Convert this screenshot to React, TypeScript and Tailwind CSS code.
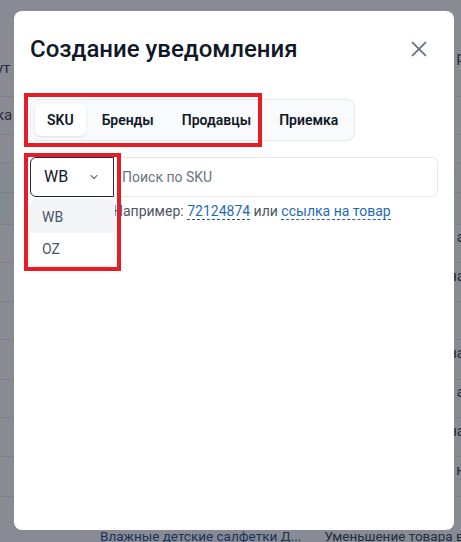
import React from "react";

const ROWS = [
  { h: 97, left: "ут", right: "р", header: true },
  { h: 38, left: "ка", right: "" },
  { h: 28, left: "", right: "" },
  { h: 30, left: "", right: "", dark: true },
  { h: 32, left: "", right: "", dark: true },
  { h: 38, left: "", right: "а" },
  { h: 39, left: "", right: "на" },
  { h: 38, left: "", right: "|", accent: true },
  { h: 40, left: "", right: "на" },
  { h: 38, left: "", right: "а" },
  { h: 39, left: "", right: "на" },
  { h: 40, left: "", right: "н" },
];

const TABS = ["SKU", "Бренды", "Продавцы", "Приемка"];

const Background: React.FC = () => (
  <div className="flex flex-col text-[15px] text-gray-700">
    {ROWS.map((r, i) => (
      <div
        key={i}
        className={`flex items-center justify-between border-b border-gray-200 ${
          r.dark ? "bg-gray-50" : "bg-white"
        }`}
        style={{ height: r.h }}
      >
        <span className={`-ml-[4px] ${r.header ? "mt-[40px]" : ""}`}>{r.left}</span>
        <span
          className={`mr-[-4px] ${r.header ? "mt-[18px]" : "-mt-[12px]"} ${
            r.accent ? "text-red-700" : ""
          }`}
        >
          {r.right}
        </span>
      </div>
    ))}
    <div className="flex h-[45px] items-start gap-[23px] pl-[100px] pt-[29px] text-[13.5px] whitespace-nowrap">
      <span className="text-[#1d4f91]">Влажные детские салфетки Д...</span>
      <span>Уменьшение товара в</span>
    </div>
  </div>
);

export default function App() {
  return (
    <div
      className="relative h-[542px] w-[461px] overflow-hidden bg-white"
      style={{ fontFamily: "Roboto, 'Noto Sans', sans-serif" }}
    >
      <Background />
      <div className="absolute inset-0 bg-[#111827]/50" />

      <div className="absolute left-[14px] top-[11px] h-[519px] w-[440px] rounded-lg bg-white px-4 pt-[22px]">
        <div className="flex items-center justify-between">
          <h2 className="text-[24px] font-medium leading-8 text-gray-900">
            Создание уведомления
          </h2>
          <button className="mr-[8px] text-gray-500">
            <svg width="22" height="22" viewBox="0 0 24 24" fill="none" stroke="currentColor" strokeWidth="2" strokeLinecap="round">
              <path d="M5 5l14 14M19 5L5 19" />
            </svg>
          </button>
        </div>

        <div className="mt-[34px] inline-flex gap-1 rounded-lg border border-gray-200 bg-gray-50 p-1">
          {TABS.map((t, i) => (
            <div
              key={t}
              className={`flex h-8 items-center rounded-md px-3 text-sm font-semibold text-gray-900 ${
                i === 0 ? "bg-white shadow-sm" : ""
              }`}
            >
              {t}
            </div>
          ))}
        </div>

        <div className="relative mt-[16px]">
          <div className="flex h-[40px]">
            <div className="flex w-[84px] items-center justify-between rounded-l-md border border-gray-800 pl-[13px] pr-[13px] text-base text-gray-900">
              <span>WB</span>
              <svg width="12" height="12" viewBox="0 0 24 24" fill="none" stroke="#6b7280" strokeWidth="2.2" strokeLinecap="round" strokeLinejoin="round">
                <path d="M6 9l6 6 6-6" />
              </svg>
            </div>
            <div className="flex flex-1 items-center rounded-r-md border border-l-0 border-gray-200 pl-[8px] text-sm text-gray-500">
              Поиск по SKU
            </div>
          </div>

          <div className="mt-1 pl-[83px] text-sm leading-5 text-gray-600">
            Например:{" "}
            <span className="border-b border-dashed border-[#1d5fa8] text-[#1f6ab8]">72124874</span>{" "}
            или{" "}
            <span className="border-b border-dashed border-[#1d5fa8] text-[#1f6ab8]">ссылка на товар</span>
          </div>

          <div className="absolute left-0 top-[43px] w-[84px] overflow-hidden rounded-md bg-white text-sm text-gray-600 shadow-md ring-1 ring-gray-100">
            <div className="flex h-[33px] items-center bg-gray-100 pl-3">WB</div>
            <div className="flex h-[32px] items-center pl-3">OZ</div>
          </div>
        </div>
      </div>

      <div className="absolute left-[24px] top-[93px] h-[54px] w-[238px] border-4 border-[#e41e26]" />
      <div className="absolute left-[24px] top-[153px] h-[118px] w-[97px] border-4 border-[#e41e26]" />
    </div>
  );
}
